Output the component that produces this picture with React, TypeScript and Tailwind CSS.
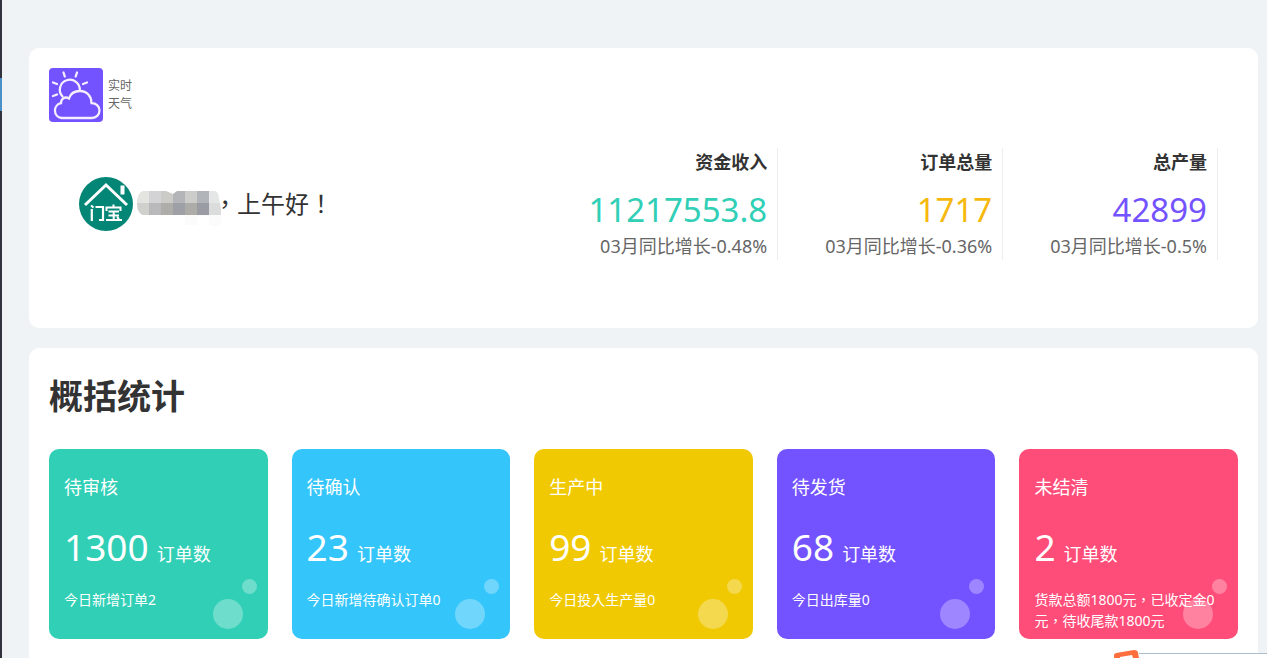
import React from 'react';

interface Stat {
  title: string;
  value: string;
  growth: string;
  color: string;
  className: string;
}

interface Summary {
  title: string;
  count: number;
  note: string;
  color: string;
}

const stats: Stat[] = [
  { title: '资金收入', value: '11217553.8', growth: '03月同比增长-0.48%', color: 'text-[#30cfb6]', className: '' },
  { title: '订单总量', value: '1717', growth: '03月同比增长-0.36%', color: 'text-[#f6b80f]', className: 'pl-[47px]' },
  { title: '总产量', value: '42899', growth: '03月同比增长-0.5%', color: 'text-[#7352ff]', className: 'pl-[47px]' },
];

const summaries: Summary[] = [
  { title: '待审核', count: 1300, note: '今日新增订单2', color: 'bg-[#30cfb6]' },
  { title: '待确认', count: 23, note: '今日新增待确认订单0', color: 'bg-[#34c5fa]' },
  { title: '生产中', count: 99, note: '今日投入生产量0', color: 'bg-[#f0c902]' },
  { title: '待发货', count: 68, note: '今日出库量0', color: 'bg-[#7352ff]' },
  { title: '未结清', count: 2, note: '货款总额1800元，已收定金0元，待收尾款1800元', color: 'bg-[#ff4d79]' },
];

const WeatherIcon: React.FC = () => (
  <svg className="size-[54px] rounded bg-[#7352ff]" viewBox="0 0 54 54" fill="none" stroke="#f3efff" strokeWidth="2.3" strokeLinecap="round">
    <path d="M14.500 4.500l1.300 4M28 4.500l-1.300 4M4 14.500l4 1.500M38 14.500l-4 1.500M4 28l4-1.500" />
    <path d="M13.500 28.500A10 10 0 1 1 30.800 22.500" />
    <path d="M12.500 50A7.500 7.500 0 0 1 12 35.200C12 30.500 16 28 20 30.500C21.500 25.500 26 23 31 23C38 23 42.500 28.500 42.500 35.200C47.500 35.200 50.500 38.500 50.500 42.500C50.500 47 47 50 43 50Z" />
  </svg>
);

const Logo: React.FC = () => (
  <svg className="size-[54px]" viewBox="0 0 54 54" fill="none" stroke="#fff">
    <circle cx="27" cy="27" r="27" fill="#048677" stroke="none" />
    <path d="M6 28L27 8L48 28" strokeWidth="3" />
    <path d="M43.500 8.500V17.500" strokeWidth="4" />
    <path d="M12.800 32V44M12 28.500l2.500 2M16.500 30H24V43H20" strokeWidth="2.2" />
    <path d="M34.500 27.500v2.500M27.500 34V30.500H41.500V34M29.500 34.500H40M29.500 38.500H40M27 43H43M34.700 34.500V43M38 40l2 2" strokeWidth="2" />
  </svg>
);

// User name hidden behind a mosaic
const MaskedName: React.FC = () => (
  <svg className="h-11 w-[84px]" viewBox="0 -8 84 44" role="img" aria-label="***">
    <clipPath id="mask">
      <path d="M6 1H29L36 4L40 1H78Q82 2 82 9Q84 15 84 25H6Q0 23 0 13Q0 3 6 1Z" />
    </clipPath>
    <path d="M48 24H84V33Q80 38 72 35V26H60V35H48Z" fill="#fbfbfb" />
    <g clipPath="url(#mask)" shapeRendering="crispEdges">
      <path d="M0 0H12V13H0Z" fill="#e4e4e0" />
      <path d="M12 0H24V13H12Z" fill="#d3d3d5" />
      <path d="M24 0H36V13H24Z" fill="#cbccc8" />
      <path d="M36 0H48V13H36Z" fill="#b3b5b9" />
      <path d="M48 0H60V13H48Z" fill="#cccdca" />
      <path d="M60 0H72V13H60Z" fill="#b1b4b9" />
      <path d="M72 0H84V13H72Z" fill="#e5e7e7" />
      <path d="M0 13H12V25H0Z" fill="#d0d1cd" />
      <path d="M12 13H24V25H12Z" fill="#b9b9bb" />
      <path d="M24 13H36V25H24Z" fill="#aeada9" />
      <path d="M36 13H48V25H36Z" fill="#9da0a5" />
      <path d="M48 13H60V25H48Z" fill="#adaca8" />
      <path d="M60 13H72V25H60Z" fill="#999da3" />
      <path d="M72 13H84V25H72Z" fill="#dadddc" />
    </g>
  </svg>
);

const App: React.FC = () => {
  return (
    <div className="flex min-h-screen bg-[#eff3f6] font-['Noto_Sans','Noto_Sans_CJK_SC',sans-serif] text-[#333]">
      {/* Sidebar edge */}
      <aside className="flex w-0.5 shrink-0 flex-col bg-[#32323e] pt-[78px]">
        <div className="h-[33px] bg-[#4b8fc9]" />
      </aside>

      <main className="flex flex-1 flex-col gap-5 pt-12 pr-[9px] pl-[27px]">
        {/* Welcome */}
        <section className="h-[280px] rounded-[10px] bg-white p-5">
          <div className="flex items-center gap-[5px]">
            <WeatherIcon />
            <div className="text-xs leading-[18px] text-[#666]">
              <p>实时</p>
              <p>天气</p>
            </div>
          </div>
          <div className="mt-[26px] flex items-center justify-between pr-5 pl-[30px]">
            <div className="flex items-center">
              <Logo />
              <div className="ml-1 flex items-center">
                <MaskedName />
                {/* The TC face centres full-width punctuation */}
                <span className="-ml-2 font-['Noto_Sans','Noto_Sans_CJK_TC',sans-serif] text-2xl">，上午好！</span>
              </div>
            </div>
            <div className="flex">
              {stats.map((stat) => (
                <div key={stat.title} className={`border-r border-[#eee] pr-2.5 text-right ${stat.className}`}>
                  <h2 className="text-lg leading-7 font-bold">{stat.title}</h2>
                  <p className={`mt-3 text-[33px] leading-[44px] ${stat.color}`}>{stat.value}</p>
                  <p className="text-lg leading-7 text-[#666]">{stat.growth}</p>
                </div>
              ))}
            </div>
          </div>
        </section>

        {/* Summary */}
        <section className="flex-1 rounded-t-[10px] bg-white px-5 pt-5 pb-4">
          <h1 className="text-[34px] leading-[56px] font-bold">概括统计</h1>
          <div className="mt-[25px] grid grid-cols-5 gap-6">
            {summaries.map((item) => (
              <div key={item.title} className={`relative h-[190px] rounded-[10px] px-[15px] pt-6 text-white ${item.color}`}>
                <h3 className="text-lg leading-7">{item.title}</h3>
                <p className="mt-5 leading-[52px]">
                  <span className="text-[37px]">{item.count}</span>
                  <span className="ml-2 text-lg">订单数</span>
                </p>
                <p className="mt-2 font-['Noto_Sans','Noto_Sans_CJK_TC',sans-serif] text-sm leading-[21px]">{item.note}</p>
                <span className="absolute right-[11px] bottom-[45px] size-[15px] rounded-full bg-white/30" />
                <span className="absolute right-[25px] bottom-2.5 size-[30px] rounded-full bg-white/30" />
              </div>
            ))}
          </div>
        </section>
      </main>

      {/* Input method bar peeking in from the corner */}
      <div className="fixed right-0 bottom-0 flex items-end">
        <svg className="h-2 w-[25px]" viewBox="0 0 25 8">
          <path d="M0 8V5Q0 4 2 3L20 0Q24 0 24 3L25 8Z" fill="#ff6f3d" />
          <path d="M6 8V7L18 5L19 8Z" fill="#fff" />
        </svg>
        <div className="h-[5px] w-32 border-t border-[#aebdca] bg-white" />
      </div>
    </div>
  );
};

export default App;
